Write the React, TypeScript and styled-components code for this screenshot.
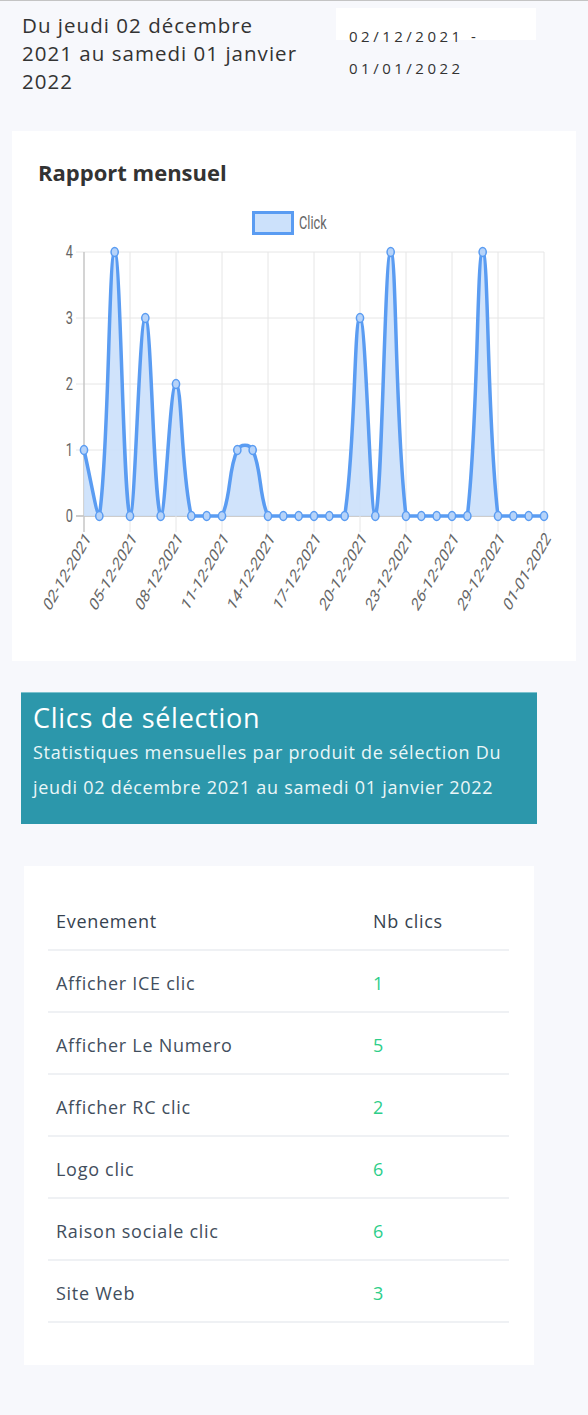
import React from "react";
import styled, { createGlobalStyle } from "styled-components";

const GlobalStyle = createGlobalStyle`
  html, body { margin: 0; padding: 0; background: #f7f8fc; }
  * { box-sizing: border-box; }
`;

const Page = styled.div`
  min-height: 1415px;
  background: #f7f8fc;
  border-top: 1px solid #c4c4c4;
  border-bottom: 1px solid #c4c4c4;
  padding-bottom: 50px;
  font-family: "Open Sans", "Noto Sans", sans-serif;
  letter-spacing: 0.045em;
`;

const Header = styled.header`
  display: flex;
  align-items: flex-start;
  padding: 7px 0 0 22px;
`;

const PeriodTitle = styled.h1`
  margin: 3px 0 0;
  width: 300px;
  flex-shrink: 0;
  font-size: 20.5px;
  font-weight: 400;
  line-height: 28px;
  letter-spacing: 0.05em;
  color: #333;
`;

const DateField = styled.div`
  margin-left: 14px;
  width: 200px;
  height: 32px;
  flex-shrink: 0;
  background: #fff;
`;

const DateValue = styled.div`
  width: 153px;
  padding: 12px 0 0 13px;
  font-size: 15px;
  line-height: 32px;
  letter-spacing: 3.5px;
  color: #333;
`;

const ChartCard = styled.section`
  margin: 36px 12px 0;
  height: 530px;
  background: #fff;
  display: flex;
  flex-direction: column;
`;

const CardTitle = styled.h2`
  margin: 0;
  padding: 26px 0 0 26px;
  font-size: 22px;
  font-weight: 700;
  line-height: 30px;
  letter-spacing: 0;
  color: #333;
`;

const ChartSvg = styled.svg`
  display: block;
  letter-spacing: 0;
`;

const ChartText = styled.text<{ $size?: number }>`
  font-family: Roboto, "Liberation Sans", sans-serif;
  font-size: ${(p) => p.$size ?? 15}px;
  fill: #666;
`;

const Banner = styled.section`
  margin: 31px 51px 0 21px;
  padding: 8px 12px 19px;
  background: #2c97ab;
  border-top: 1px solid #7cc2ce;
`;

const BannerTitle = styled.h3`
  margin: 0;
  font-size: 27px;
  font-weight: 400;
  line-height: 34px;
  color: #fff;
`;

const BannerText = styled.p`
  margin: 0;
  font-size: 18px;
  line-height: 35px;
  color: #eaf6f8;
`;

const TableCard = styled.section`
  margin: 42px 54px 0 24px;
  padding: 23px 25px 42px 24px;
  background: #fff;
`;

const Table = styled.table`
  width: 100%;
  border-collapse: collapse;
`;

const HeadCell = styled.th<{ $w?: number }>`
  width: ${(p) => (p.$w ? `${p.$w}px` : "auto")};
  padding: 20px 8px 16px;
  line-height: 24px;
  font-size: 18px;
  font-weight: 400;
  text-align: left;
  color: #36424f;
  border-bottom: 2px solid #eff1f4;
`;

const Cell = styled.td<{ $count?: boolean }>`
  padding: 20px 8px 16px;
  line-height: 24px;
  font-size: 18px;
  color: ${(p) => (p.$count ? "#2dce89" : "#424e5d")};
  border-bottom: 2px solid #eff1f4;
`;

const LEFT = 84;
const RIGHT = 544;
const TOP = 252;
const BOTTOM = 516;
const SX = 0.85;
const SY = 1.2;
const LINE = "#5a9cf2";

const values = [1, 0, 4, 0, 3, 0, 2, 0, 0, 0, 1, 1, 0, 0, 0, 0, 0, 0, 3, 0, 4, 0, 0, 0, 0, 0, 4, 0, 0, 0, 0];
const labels = [
  "02-12-2021", "05-12-2021", "08-12-2021", "11-12-2021", "14-12-2021", "17-12-2021",
  "20-12-2021", "23-12-2021", "26-12-2021", "29-12-2021", "01-01-2022",
];

type Pt = { x: number; y: number };

const step = (RIGHT - LEFT) / (values.length - 1);
const points: Pt[] = values.map((v, i) => ({ x: LEFT + i * step, y: BOTTOM - (v / 4) * (BOTTOM - TOP) }));

const clamp = (v: number, a: number, b: number) => Math.max(a, Math.min(b, v));

function controls(pts: Pt[], t = 0.4) {
  return pts.map((cur, i) => {
    const prev = pts[i - 1] ?? cur;
    const next = pts[i + 1] ?? cur;
    const c = { x: cur.x / SX, y: cur.y / SY };
    const p = { x: prev.x / SX, y: prev.y / SY };
    const n = { x: next.x / SX, y: next.y / SY };
    const d01 = Math.hypot(c.x - p.x, c.y - p.y);
    const d12 = Math.hypot(n.x - c.x, n.y - c.y);
    const sum = d01 + d12;
    const s01 = sum ? d01 / sum : 0;
    const s12 = sum ? d12 / sum : 0;
    const fa = t * s01;
    const fb = t * s12;
    const before = {
      x: clamp((c.x - fa * (n.x - p.x)) * SX, LEFT, RIGHT),
      y: clamp((c.y - fa * (n.y - p.y)) * SY, TOP, BOTTOM),
    };
    const after = {
      x: clamp((c.x + fb * (n.x - p.x)) * SX, LEFT, RIGHT),
      y: clamp((c.y + fb * (n.y - p.y)) * SY, TOP, BOTTOM),
    };
    return { before, after };
  });
}

const ctrl = controls(points);
let linePath = `M${points[0].x},${points[0].y}`;
for (let i = 1; i < points.length; i++) {
  const a = ctrl[i - 1].after;
  const b = ctrl[i].before;
  linePath += ` C${a.x},${a.y} ${b.x},${b.y} ${points[i].x},${points[i].y}`;
}
const areaPath = `${linePath} L${RIGHT},${BOTTOM} L${LEFT},${BOTTOM} Z`;

const yTicks = [0, 1, 2, 3, 4];

function MonthlyChart() {
  return (
    <ChartSvg width={564} height={474} viewBox="0 0 564 474">
      <g transform="translate(-12,-187)">
        <rect x={253.5} y={212.5} width={39} height={21} fill="#cce1fb" stroke={LINE} strokeWidth={3} />
        <ChartText transform="translate(299,223) scale(0.85,1.25)" dominantBaseline="central">
          Click
        </ChartText>

        {yTicks.map((v) => {
          const y = BOTTOM - (v / 4) * (BOTTOM - TOP);
          return (
            <g key={v}>
              <line x1={76} x2={RIGHT} y1={y} y2={y} stroke={v === 0 ? "#bdbdbd" : "#e6e6e6"} strokeWidth={v === 0 ? 1.5 : 1} />
              <ChartText transform={`translate(73,${y}) scale(0.85,1.2)`} textAnchor="end" dominantBaseline="central">
                {v}
              </ChartText>
            </g>
          );
        })}

        {labels.map((lab, k) => {
          const x = LEFT + k * 3 * step;
          return (
            <g key={lab}>
              <line x1={x} x2={x} y1={TOP} y2={532} stroke={k === 0 ? "#c6c6c6" : "#e6e6e6"} strokeWidth={k === 0 ? 1.5 : 1} />
              <ChartText
                $size={15.5}
                transform={`translate(${x + 4},535) scale(0.85,1.2) rotate(-51)`}
                textAnchor="end"
                dominantBaseline="central"
              >
                {lab}
              </ChartText>
            </g>
          );
        })}

        <path d={areaPath} fill="#cbe0fb" fillOpacity={0.9} />
        <path d={linePath} fill="none" stroke={LINE} strokeWidth={3.5} />
        {points.map((p, i) => (
          <ellipse key={i} cx={p.x} cy={p.y} rx={3.6} ry={4.4} fill="#b6d3f9" stroke={LINE} strokeWidth={1.5} />
        ))}
      </g>
    </ChartSvg>
  );
}

const rows: [string, number][] = [
  ["Afficher ICE clic", 1],
  ["Afficher Le Numero", 5],
  ["Afficher RC clic", 2],
  ["Logo clic", 6],
  ["Raison sociale clic", 6],
  ["Site Web", 3],
];

export default function App() {
  return (
    <>
      <GlobalStyle />
      <Page>
        <Header>
          <PeriodTitle>
            Du jeudi 02 décembre
            <br />
            2021 au samedi 01 janvier
            <br />
            2022
          </PeriodTitle>
          <DateField>
            <DateValue>02/12/2021 - 01/01/2022</DateValue>
          </DateField>
        </Header>

        <ChartCard>
          <CardTitle>Rapport mensuel</CardTitle>
          <MonthlyChart />
        </ChartCard>

        <Banner>
          <BannerTitle>Clics de sélection</BannerTitle>
          <BannerText>
            Statistiques mensuelles par produit de sélection Du
            <br />
            jeudi 02 décembre 2021 au samedi 01 janvier 2022
          </BannerText>
        </Banner>

        <TableCard>
          <Table>
            <thead>
              <tr>
                <HeadCell $w={317}>Evenement</HeadCell>
                <HeadCell>Nb clics</HeadCell>
              </tr>
            </thead>
            <tbody>
              {rows.map(([name, n]) => (
                <tr key={name}>
                  <Cell>{name}</Cell>
                  <Cell $count>{n}</Cell>
                </tr>
              ))}
            </tbody>
          </Table>
        </TableCard>
      </Page>
    </>
  );
}
